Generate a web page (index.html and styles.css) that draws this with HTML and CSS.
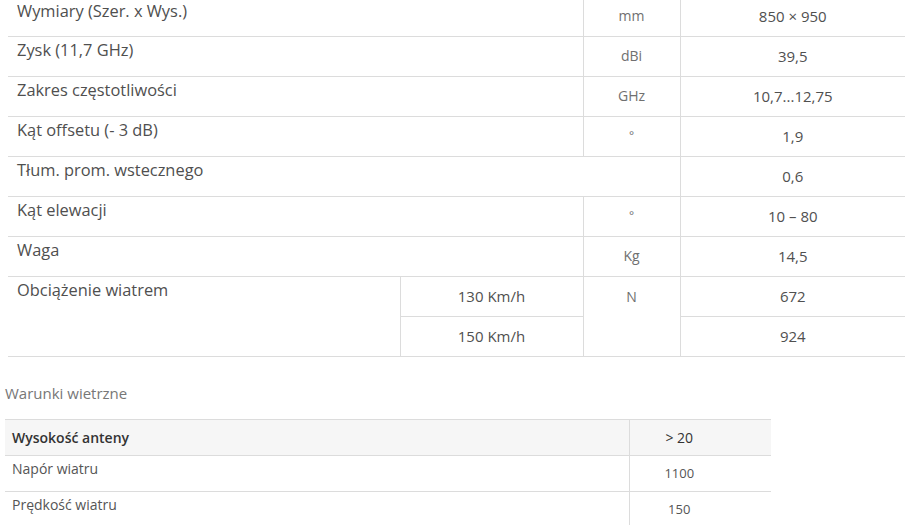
FILE: index.html
```html
<!DOCTYPE html>
<html lang="pl">
<head>
<meta charset="utf-8">
<title>Parametry anteny</title>
<link rel="stylesheet" href="styles.css">
</head>
<body>
<div class="page">
  <table class="spec">
    <colgroup>
      <col class="c-label"><col class="c-sub"><col class="c-unit"><col class="c-val">
    </colgroup>
    <tbody>
      <tr class="first">
        <td class="label" colspan="2">Wymiary (Szer. x Wys.)</td>
        <td class="unit">mm</td>
        <td class="val">850 × 950</td>
      </tr>
      <tr>
        <td class="label" colspan="2">Zysk (11,7 GHz)</td>
        <td class="unit">dBi</td>
        <td class="val">39,5</td>
      </tr>
      <tr>
        <td class="label" colspan="2">Zakres częstotliwości</td>
        <td class="unit">GHz</td>
        <td class="val">10,7...12,75</td>
      </tr>
      <tr>
        <td class="label" colspan="2">Kąt offsetu (- 3 dB)</td>
        <td class="unit deg">°</td>
        <td class="val">1,9</td>
      </tr>
      <tr>
        <td class="label" colspan="3">Tłum. prom. wstecznego</td>
        <td class="val">0,6</td>
      </tr>
      <tr>
        <td class="label" colspan="2">Kąt elewacji</td>
        <td class="unit deg">°</td>
        <td class="val">10 – 80</td>
      </tr>
      <tr>
        <td class="label" colspan="2">Waga</td>
        <td class="unit">Kg</td>
        <td class="val">14,5</td>
      </tr>
      <tr>
        <td class="label" rowspan="2">Obciążenie wiatrem</td>
        <td class="sub">130 Km/h</td>
        <td class="unit top" rowspan="2">N</td>
        <td class="val">672</td>
      </tr>
      <tr>
        <td class="sub">150 Km/h</td>
        <td class="val">924</td>
      </tr>
    </tbody>
  </table>

  <p class="caption">Warunki wietrzne</p>

  <table class="wind">
    <colgroup><col class="w-label"><col class="w-val"></colgroup>
    <thead>
      <tr>
        <th class="w-head">Wysokość anteny</th>
        <th class="w-headval">&gt; 20</th>
      </tr>
    </thead>
    <tbody>
      <tr>
        <td class="w-lab">Napór wiatru</td>
        <td class="w-num">1100</td>
      </tr>
      <tr>
        <td class="w-lab">Prędkość wiatru</td>
        <td class="w-num">150</td>
      </tr>
    </tbody>
  </table>
</div>
</body>
</html>
```
FILE: styles.css
```css
html, body {
  margin: 0;
  padding: 0;
  background: #fff;
  overflow: hidden;
}
body {
  font-family: "Open Sans", "Noto Sans", sans-serif;
  color: #555;
}
.page {
  padding-left: 5px;
}
.spec {
  margin: 0 0 0 3px;
  border-collapse: collapse;
  table-layout: fixed;
  width: 897px;
}
.c-label { width: 392px; }
.c-sub { width: 183px; }
.c-unit { width: 97px; }
.c-val { width: 225px; }
.spec td {
  height: 40px;
  padding: 0;
  border-bottom: 1px solid #dcdcdc;
  box-sizing: border-box;
}
.spec td.label {
  vertical-align: top;
  padding: 2px 0 0 9px;
  font-size: 16.4px;
  line-height: 22px;
  color: #4f4f4f;
}
.spec td.sub,
.spec td.unit,
.spec td.val {
  border-left: 1px solid #dcdcdc;
  text-align: center;
  vertical-align: middle;
  font-size: 15px;
  line-height: 20px;
}
.spec td.unit {
  font-size: 14px;
  color: #707070;
}
.spec td.unit.deg {
  font-size: 12px;
}
.spec td.unit.top {
  vertical-align: top;
  padding-top: 10px;
}
.spec td.val,
.spec td.sub {
  color: #505050;
}
.spec tr.first td {
  height: 36px;
}
.spec tr.first td.label {
  padding-top: 0;
}
.spec tr.first td.unit,
.spec tr.first td.val {
  padding-bottom: 4px;
}
.caption {
  margin: 26px 0 0 0;
  font-size: 15px;
  line-height: 20px;
  color: #777;
}
.wind {
  margin-top: 16px;
  border-collapse: collapse;
  table-layout: fixed;
  width: 766px;
}
.w-label { width: 624px; }
.w-val { width: 142px; }
.wind th,
.wind td {
  height: 36px;
  box-sizing: border-box;
  padding: 0;
  border-top: 1px solid #dcdcdc;
}
.wind th {
  background: #f6f6f6;
  font-weight: 600;
  font-size: 14px;
  color: #333;
  vertical-align: middle;
}
.wind .w-head {
  text-align: left;
  padding-left: 7px;
}
.wind .w-headval,
.wind .w-num {
  border-left: 1px solid #dcdcdc;
  text-align: center;
  padding-right: 42px;
}
.wind .w-headval {
  font-weight: 400;
  color: #333;
}
.wind td.w-lab {
  vertical-align: top;
  padding: 3px 0 0 7px;
  font-size: 14px;
  line-height: 20px;
  color: #555;
}
.wind td.w-num {
  vertical-align: middle;
  font-size: 13px;
  color: #555;
}
```
